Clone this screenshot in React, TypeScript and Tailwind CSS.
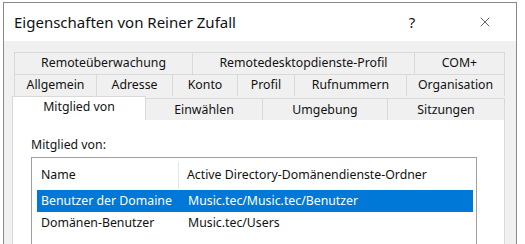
import { X } from "lucide-react";

const row1 = [
  { label: "Remoteüberwachung", w: "w-[179px]" },
  { label: "Remotedesktopdienste-Profil", w: "w-[222px]" },
  { label: "COM+", w: "w-[90px]" },
];

const row2 = [
  { label: "Allgemein", w: "w-[83px]" },
  { label: "Adresse", w: "w-[76px]" },
  { label: "Konto", w: "w-[65px]" },
  { label: "Profil", w: "w-[57px]" },
  { label: "Rufnummern", w: "w-[112px]" },
  { label: "Organisation", w: "w-[98px]" },
];

const row3 = [
  { label: "Einwählen", w: "w-[117px]" },
  { label: "Umgebung", w: "w-[125px]" },
  { label: "Sitzungen", w: "w-[117px]" },
];

const members = [
  { name: "Benutzer der Domaine", path: "Music.tec/Music.tec/Benutzer", selected: true },
  { name: "Domänen-Benutzer", path: "Music.tec/Users", selected: false },
];

function Tab({ label, w }: { label: string; w: string }) {
  return (
    <div className={`${w} h-[22px] flex items-center justify-center border-t border-r border-[#d9d9d9] first:border-l`}>
      {label}
    </div>
  );
}

export default function App() {
  return (
    <div className="w-[525px] h-[244px] bg-white overflow-hidden font-['Noto_Sans',sans-serif] text-[12.3px] text-[#111]">
      <div className="ml-[3px] mt-[2px] w-[514px] h-[260px] border border-[#8a8a8a] flex flex-col">
        {/* title bar */}
        <div className="h-[38px] bg-white flex items-center pl-[10px] shrink-0">
          <span className="text-[15px] flex-1">Eigenschaften von Reiner Zufall</span>
          <span className="w-[20px] text-center text-[15px] mr-[55px]">?</span>
          <X className="w-[16px] h-[16px] mr-[23px]" strokeWidth={1} />
        </div>

        {/* body */}
        <div className="flex-1 bg-[#f0f0f0] pt-[11px] pl-[8px]">
          <div className="ml-[2px] flex">
            {row1.map((t) => (
              <Tab key={t.label} {...t} />
            ))}
          </div>
          <div className="ml-[2px] flex">
            {row2.map((t) => (
              <Tab key={t.label} {...t} />
            ))}
          </div>
          <div className="flex items-end h-[24px]">
            <div className="w-[134px] h-[24px] bg-white border-t border-l border-r border-[#d9d9d9] flex items-start justify-center pt-[1px]">
              Mitglied von
            </div>
            {row3.map((t) => (
              <div
                key={t.label}
                className={`${t.w} h-[22px] flex items-center justify-center border-t border-r border-[#d9d9d9] pt-[1px]`}
              >
                {t.label}
              </div>
            ))}
          </div>

          {/* panel */}
          <div className="w-[493px] h-[140px] bg-white border-l border-r border-[#d9d9d9] pt-[17px] pl-[18px]">
            <div className="leading-[16px]">Mitglied von:</div>
            <div className="mt-[4px] w-[446px] h-[100px] border border-[#a0a0a0] pt-[2px] pl-[5px]">
              <div className="flex h-[30px] items-center">
                <div className="w-[142px] pl-[4px] h-[27px] flex items-center border-r border-[#e5e5e5]">Name</div>
                <div className="pl-[8px]">Active Directory-Domänendienste-Ordner</div>
              </div>
              {members.map((m) => (
                <div
                  key={m.name}
                  className={`flex h-[22px] items-center w-[436px] ${m.selected ? "bg-[#0078d7] text-white" : ""}`}
                >
                  <div className="w-[142px] pl-[4px]">{m.name}</div>
                  <div className="pl-[9px]">{m.path}</div>
                </div>
              ))}
            </div>
          </div>
        </div>
      </div>
    </div>
  );
}
